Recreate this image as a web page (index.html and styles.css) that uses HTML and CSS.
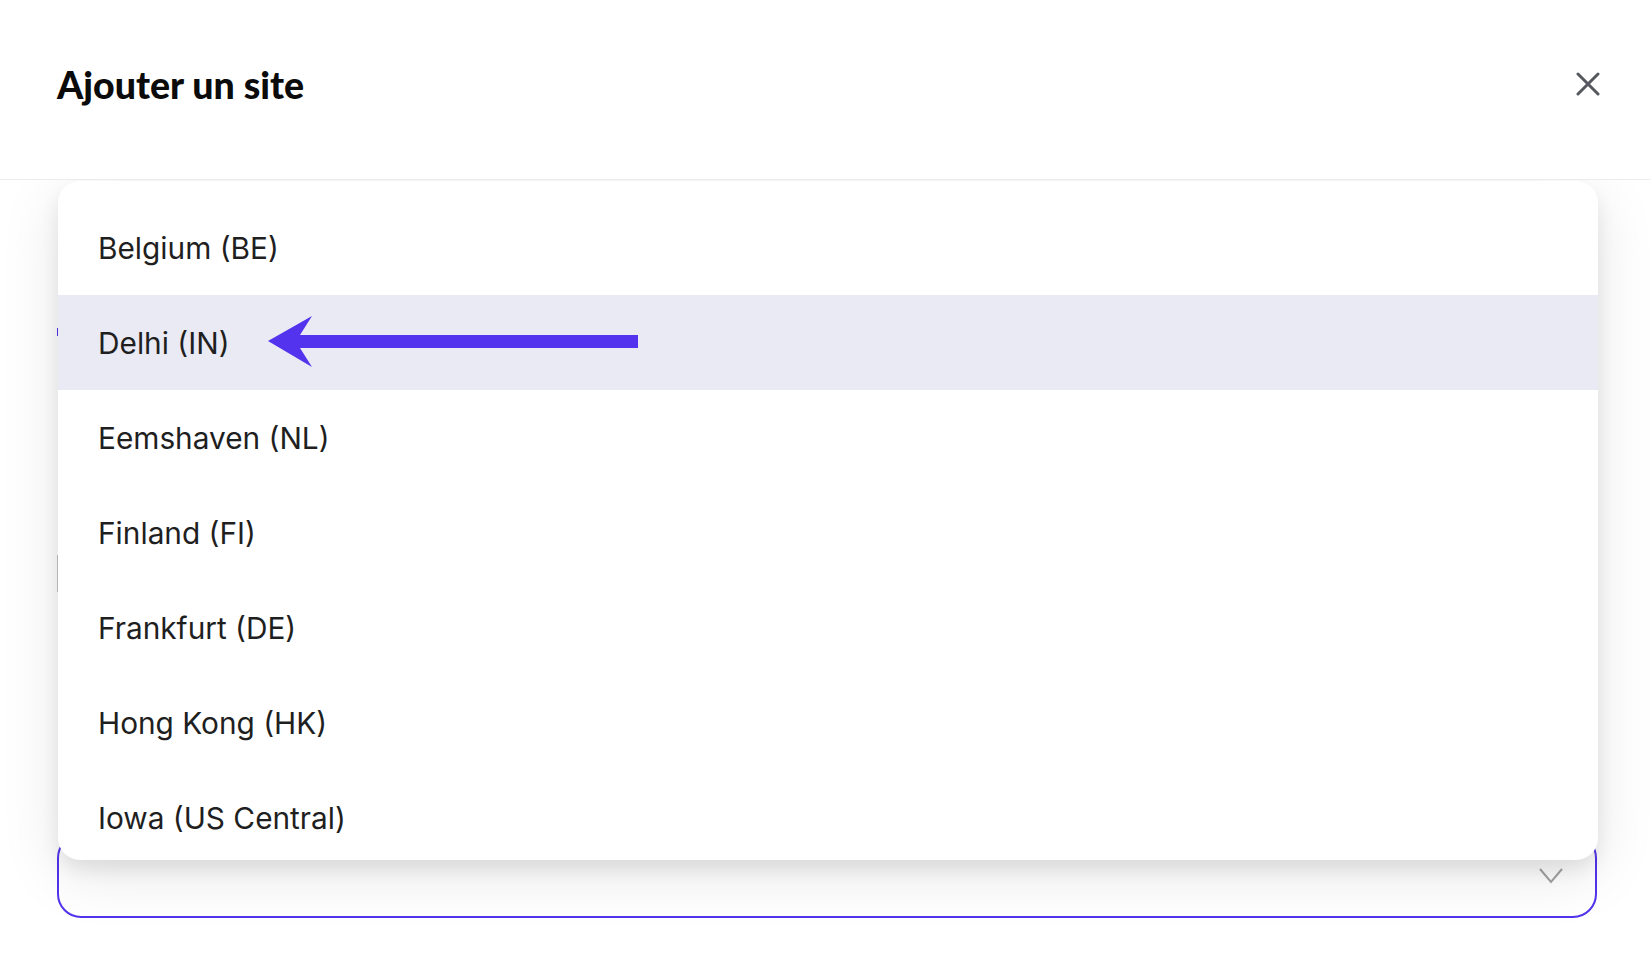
FILE: index.html
```html
<!DOCTYPE html>
<html lang="fr">
<head>
<meta charset="utf-8">
<title>Ajouter un site</title>
<link rel="stylesheet" href="styles.css">
</head>
<body>
<header class="modal-header">
  <h1 class="modal-title">Ajouter un site</h1>
  <button class="close-btn" aria-label="Fermer">
    <svg width="24" height="24" viewBox="0 0 24 24"><path d="M2 2 L22 22 M22 2 L2 22" stroke="#55595f" stroke-width="3" fill="none" stroke-linecap="round"/></svg>
  </button>
</header>
<main class="modal-body">
  <div class="behind">
    <div class="mark mark-purple"></div>
    <div class="mark mark-gray"></div>
  </div>
  <div class="select-wrap">
    <div class="select-box">
      <svg class="chevron" width="26" height="18" viewBox="0 0 26 18"><path d="M2 2 L13 15 L24 2" stroke="#a3a3a3" stroke-width="2" fill="none"/></svg>
    </div>
    <ul class="dropdown">
      <li class="option">Belgium (BE)</li>
      <li class="option active">Delhi (IN)</li>
      <li class="option">Eemshaven (NL)</li>
      <li class="option">Finland (FI)</li>
      <li class="option">Frankfurt (DE)</li>
      <li class="option">Hong Kong (HK)</li>
      <li class="option">Iowa (US Central)</li>
    </ul>
  </div>
  <svg class="annot-arrow" width="1650" height="974" viewBox="0 0 1650 974"><path d="M268 341 L312 316 L300 335 L638 335 L638 348 L300 348 L312 367 Z" fill="#5333ed"/></svg>
</main>
</body>
</html>
```
FILE: styles.css
```css
* { box-sizing: border-box; }
html, body { margin: 0; padding: 0; }
body {
  width: 1650px;
  height: 974px;
  overflow: hidden;
  background: #ffffff;
  font-family: Inter, "Noto Sans", sans-serif;
  color: #1f1f1f;
  position: relative;
}
.modal-header {
  position: relative;
  z-index: 3;
  height: 180px;
  background: #ffffff;
  border-bottom: 1px solid #ececec;
  display: flex;
  align-items: center;
  justify-content: space-between;
  padding: 0 50px 11px 57px;
}
.modal-title {
  margin: 0;
  font-family: Lato, "Open Sans", sans-serif;
  font-weight: 900;
  font-size: 37.5px;
  letter-spacing: 0;
  color: #0b0b0b;
}
.close-btn {
  border: 0;
  background: none;
  padding: 0;
  width: 24px;
  height: 24px;
  display: flex;
  cursor: pointer;
}
.modal-body {
  padding: 0 53px 0 57px;
}
.behind {
  height: 654px;
  display: flex;
  flex-direction: column;
  padding-top: 148px;
}
.mark { width: 2px; }
.mark-purple { height: 8px; background: #5333ed; }
.mark-gray { height: 37px; margin-top: 219px; background: #c4c4c4; width: 1px; }
.select-wrap {
  position: relative;
}
.select-box {
  height: 84px;
  border: 2px solid #5333ed;
  border-radius: 24px;
  display: flex;
  align-items: center;
  justify-content: flex-end;
  padding-right: 31px;
}
.chevron { display: block; }
.dropdown {
  position: absolute;
  left: 1px;
  right: -1px;
  bottom: 58px;
  height: 679px;
  margin: 0;
  padding: 19px 0 0;
  list-style: none;
  background: #ffffff;
  border-radius: 22px;
  overflow: hidden;
  box-shadow: 0 10px 18px rgba(0,0,0,0.08), 0 14px 60px rgba(0,0,0,0.10);
  z-index: 2;
}
.option {
  height: 95px;
  display: flex;
  align-items: center;
  padding-left: 40px;
  font-size: 29.8px;
  color: #1f1f1f;
}
.option.active { background: #e9eaf4; }
.annot-arrow {
  position: absolute;
  left: 0;
  top: 0;
  z-index: 5;
  pointer-events: none;
}
```
